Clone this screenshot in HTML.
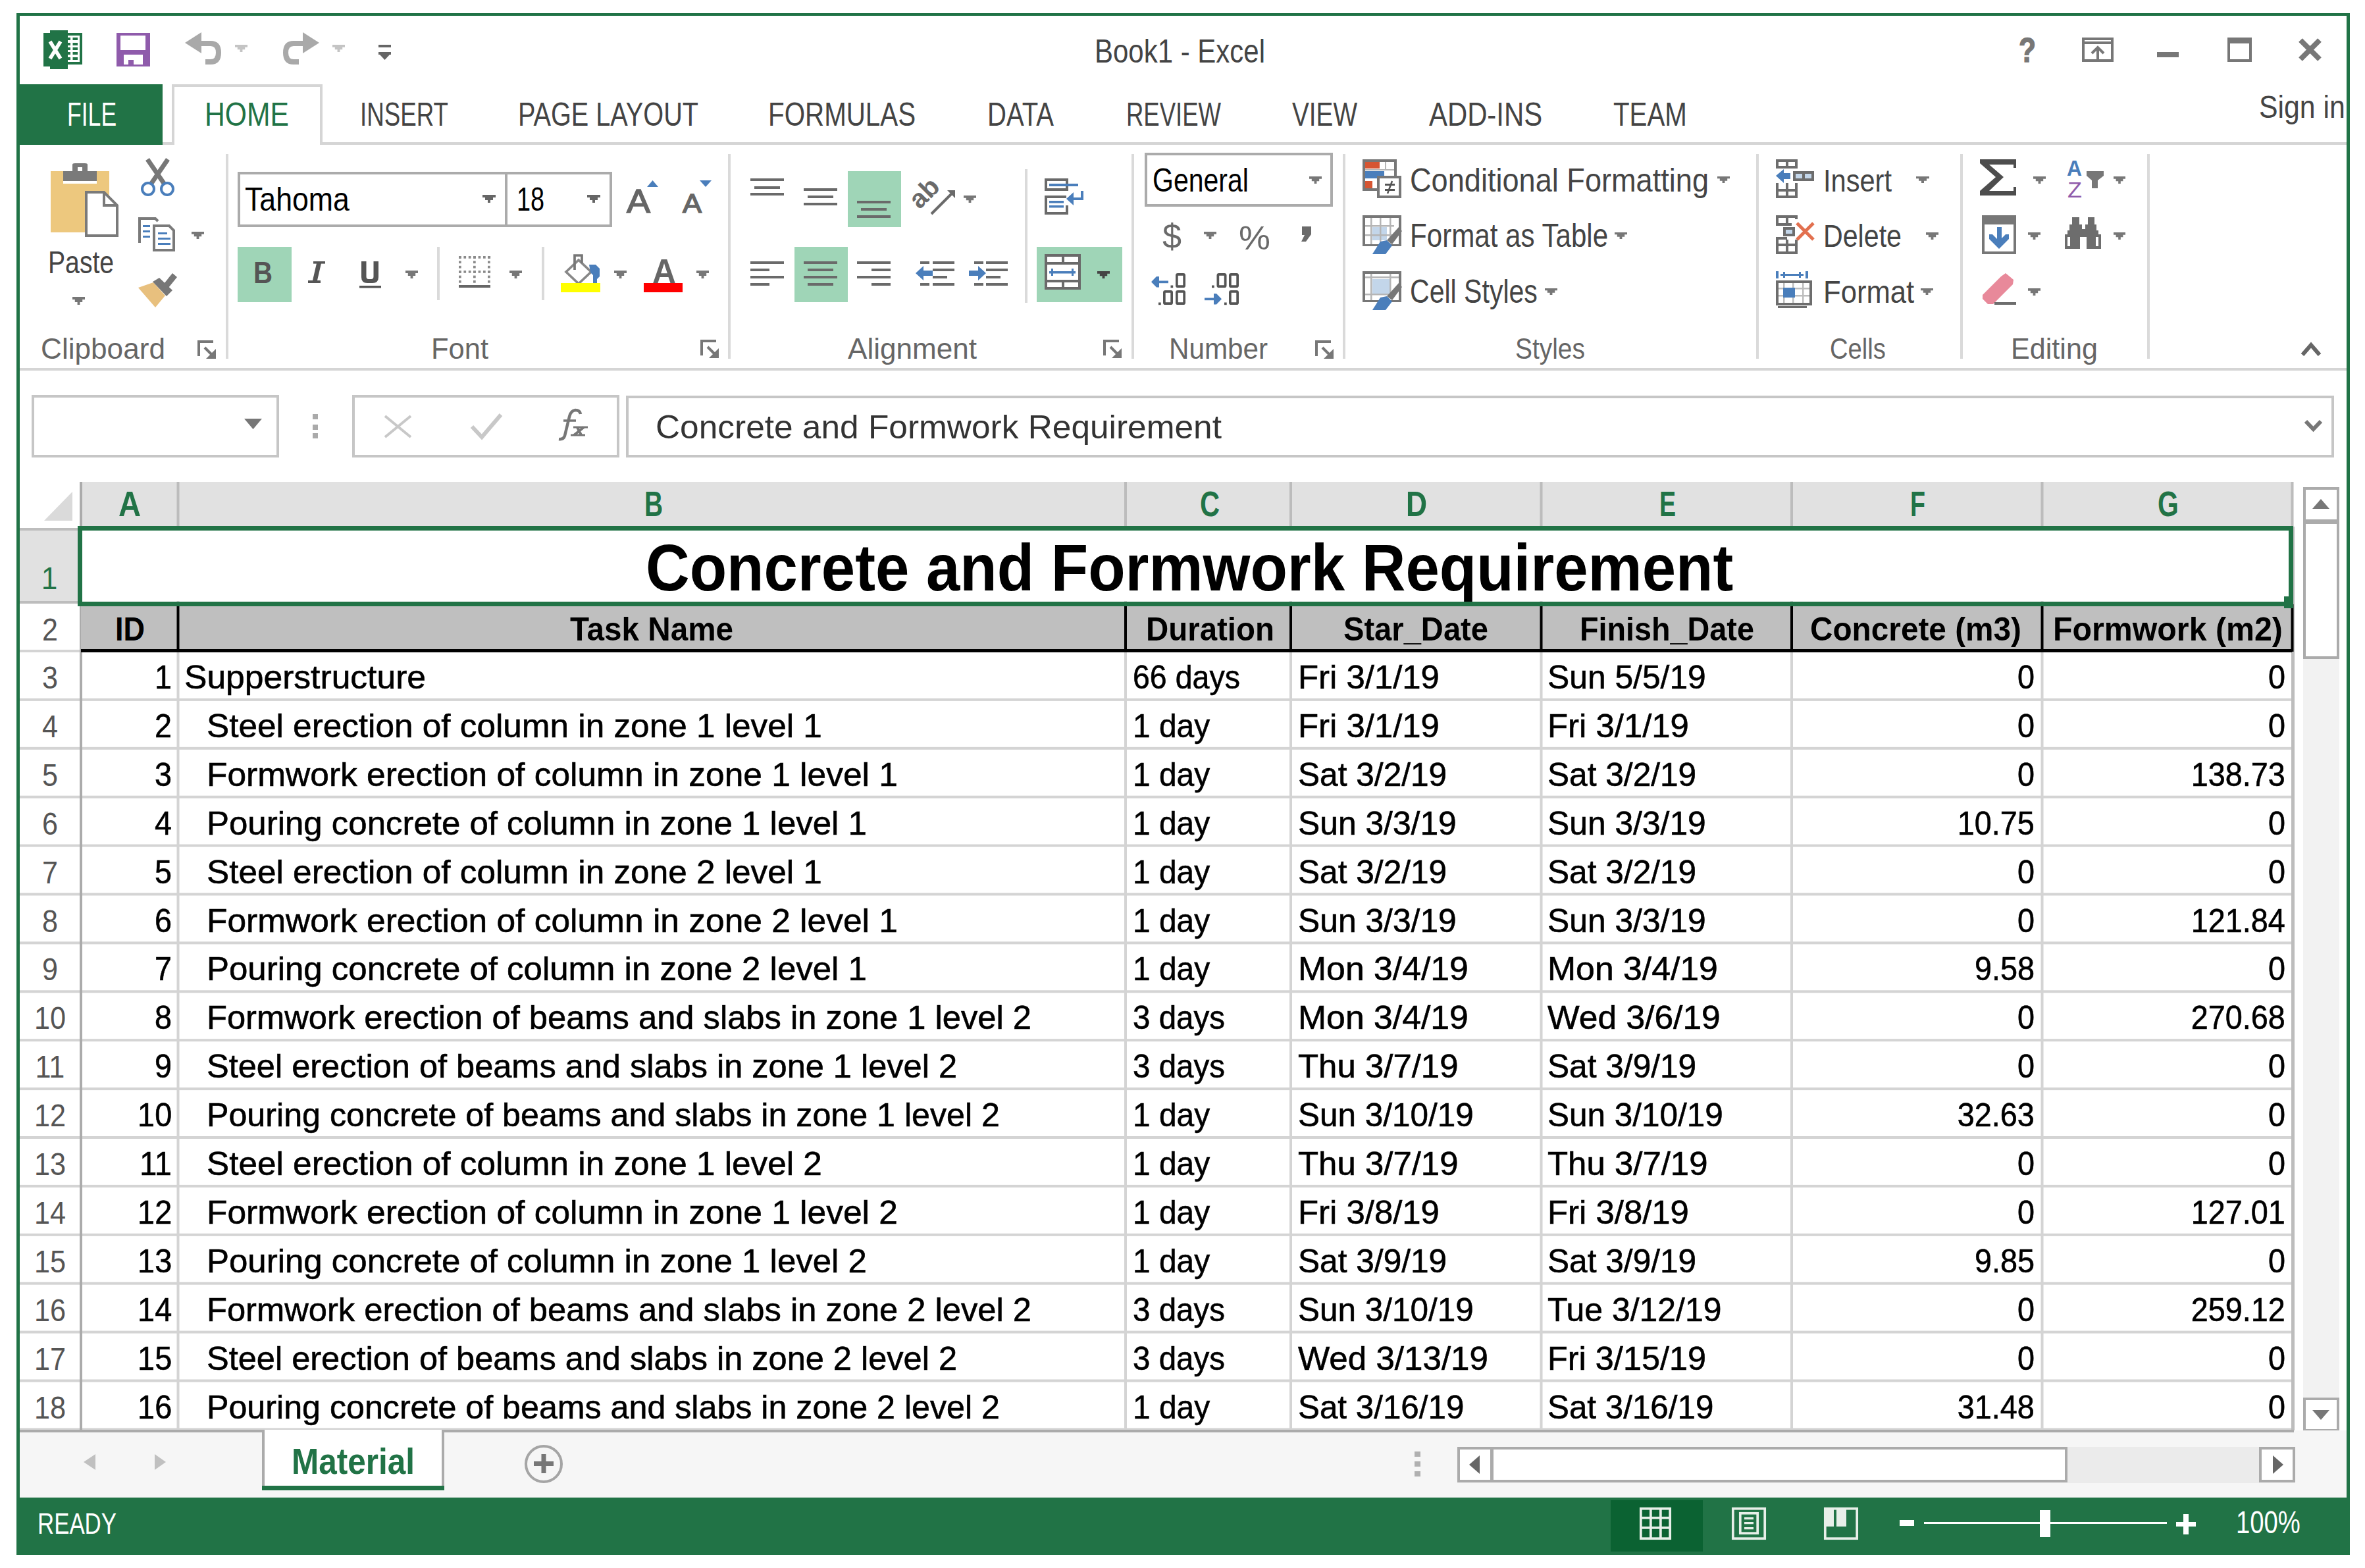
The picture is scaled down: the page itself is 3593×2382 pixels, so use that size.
<!DOCTYPE html>
<html><head><meta charset="utf-8"><style>
html,body{margin:0;padding:0;background:#fff;overflow:hidden}
svg{display:block}
text{font-family:"Liberation Sans",sans-serif}
</style></head><body>
<svg width="3593" height="2382" viewBox="0 0 3593 2382">
<rect x="0" y="0" width="3593" height="2382" fill="#ffffff"/>
<rect x="25" y="20" width="3545" height="4" fill="#217346"/>
<rect x="25" y="20" width="5" height="2342" fill="#217346"/>
<rect x="3565" y="20" width="5" height="2342" fill="#217346"/>
<text x="1663.0" y="95.0" font-size="49.42" textLength="259.0" lengthAdjust="spacingAndGlyphs" fill="#444">Book1 - Excel</text>
<rect x="30" y="216" width="3535" height="4" fill="#d5d5d5"/>
<rect x="29" y="128" width="218" height="92" fill="#217346"/>
<text x="102.0" y="191.0" font-size="49.42" textLength="75.1" lengthAdjust="spacingAndGlyphs" fill="#fff">FILE</text>
<rect x="261" y="128" width="229" height="95" fill="#fff"/>
<path d="M263 220 V130 H488 V220" fill="none" stroke="#d5d5d5" stroke-width="4"/>
<text x="311.0" y="191.0" font-size="49.42" textLength="128.0" lengthAdjust="spacingAndGlyphs" fill="#217346">HOME</text>
<text x="547.0" y="191.0" font-size="49.42" textLength="134.0" lengthAdjust="spacingAndGlyphs" fill="#444">INSERT</text>
<text x="787.0" y="191.0" font-size="49.42" textLength="274.0" lengthAdjust="spacingAndGlyphs" fill="#444">PAGE LAYOUT</text>
<text x="1167.0" y="191.0" font-size="49.42" textLength="224.1" lengthAdjust="spacingAndGlyphs" fill="#444">FORMULAS</text>
<text x="1500.0" y="191.0" font-size="49.42" textLength="100.9" lengthAdjust="spacingAndGlyphs" fill="#444">DATA</text>
<text x="1711.0" y="191.0" font-size="49.42" textLength="144.0" lengthAdjust="spacingAndGlyphs" fill="#444">REVIEW</text>
<text x="1963.0" y="191.0" font-size="49.42" textLength="99.0" lengthAdjust="spacingAndGlyphs" fill="#444">VIEW</text>
<text x="2171.0" y="191.0" font-size="49.42" textLength="172.1" lengthAdjust="spacingAndGlyphs" fill="#444">ADD-INS</text>
<text x="2451.0" y="191.0" font-size="49.42" textLength="111.9" lengthAdjust="spacingAndGlyphs" fill="#444">TEAM</text>
<text x="3432.0" y="179.0" font-size="47.97" textLength="130.9" lengthAdjust="spacingAndGlyphs" fill="#444">Sign in</text>
<rect x="30" y="559" width="3535" height="4" fill="#d5d5d5"/>
<rect x="343" y="234" width="4" height="311" fill="#dadada"/>
<rect x="1106" y="234" width="4" height="311" fill="#dadada"/>
<rect x="1719" y="234" width="4" height="311" fill="#dadada"/>
<rect x="2040" y="234" width="4" height="311" fill="#dadada"/>
<rect x="2668" y="234" width="4" height="311" fill="#dadada"/>
<rect x="2978" y="234" width="4" height="311" fill="#dadada"/>
<rect x="3262" y="234" width="4" height="311" fill="#dadada"/>
<text x="62.0" y="545.0" font-size="43.60" textLength="189.0" lengthAdjust="spacingAndGlyphs" fill="#666">Clipboard</text>
<text x="655.0" y="545.0" font-size="43.60" textLength="87.0" lengthAdjust="spacingAndGlyphs" fill="#666">Font</text>
<text x="1288.0" y="545.0" font-size="43.60" textLength="196.1" lengthAdjust="spacingAndGlyphs" fill="#666">Alignment</text>
<text x="1776.0" y="545.0" font-size="43.60" textLength="150.1" lengthAdjust="spacingAndGlyphs" fill="#666">Number</text>
<text x="2302.0" y="545.0" font-size="43.60" textLength="105.9" lengthAdjust="spacingAndGlyphs" fill="#666">Styles</text>
<text x="2780.0" y="545.0" font-size="43.60" textLength="84.9" lengthAdjust="spacingAndGlyphs" fill="#666">Cells</text>
<text x="3055.0" y="545.0" font-size="43.60" textLength="131.9" lengthAdjust="spacingAndGlyphs" fill="#666">Editing</text>
<text x="73.0" y="415.0" font-size="47.97" textLength="100.1" lengthAdjust="spacingAndGlyphs" fill="#444">Paste</text>
<rect x="363.0" y="263.0" width="565" height="80" fill="none" stroke="#ababab" stroke-width="4"/>
<rect x="767" y="261" width="4" height="84" fill="#ababab"/>
<text x="372.0" y="320.0" font-size="49.42" textLength="158.9" lengthAdjust="spacingAndGlyphs" fill="#000">Tahoma</text>
<text x="785.0" y="320.0" font-size="49.42" textLength="42.1" lengthAdjust="spacingAndGlyphs" fill="#000">18</text>
<rect x="1741.0" y="234.0" width="282" height="78" fill="none" stroke="#ababab" stroke-width="4"/>
<text x="1751.0" y="291.0" font-size="49.42" textLength="145.9" lengthAdjust="spacingAndGlyphs" fill="#000">General</text>
<text x="2142.0" y="291.0" font-size="49.42" textLength="454.0" lengthAdjust="spacingAndGlyphs" fill="#444">Conditional Formatting</text>
<text x="2142.0" y="375.0" font-size="49.42" textLength="301.1" lengthAdjust="spacingAndGlyphs" fill="#444">Format as Table</text>
<text x="2142.0" y="460.0" font-size="49.42" textLength="193.9" lengthAdjust="spacingAndGlyphs" fill="#444">Cell Styles</text>
<text x="2770.0" y="291.0" font-size="47.97" textLength="104.0" lengthAdjust="spacingAndGlyphs" fill="#444">Insert</text>
<text x="2770.0" y="375.0" font-size="47.97" textLength="119.0" lengthAdjust="spacingAndGlyphs" fill="#444">Delete</text>
<text x="2770.0" y="460.0" font-size="47.97" textLength="138.1" lengthAdjust="spacingAndGlyphs" fill="#444">Format</text>
<rect x="361" y="375" width="82" height="84" fill="#9fd5b7"/>
<rect x="1288" y="260" width="81" height="85" fill="#9fd5b7"/>
<rect x="1207" y="375" width="81" height="84" fill="#9fd5b7"/>
<rect x="1575" y="375" width="130" height="84" fill="#9fd5b7"/>
<path d="M66 50 H76 V46 H103 V105 H76 V101 H66 Z" fill="#217346"/>
<rect x="103" y="50" width="22" height="48" fill="#217346"/>
<rect x="103" y="54" width="18" height="40" fill="#fff"/>
<rect x="103" y="57" width="4" height="4" fill="#217346"/>
<rect x="110.5" y="57" width="7.5" height="4" fill="#217346"/>
<rect x="103" y="65" width="4" height="4" fill="#217346"/>
<rect x="110.5" y="65" width="7.5" height="4" fill="#217346"/>
<rect x="103" y="72" width="4" height="4" fill="#217346"/>
<rect x="110.5" y="72" width="7.5" height="4" fill="#217346"/>
<rect x="103" y="79" width="4" height="4" fill="#217346"/>
<rect x="110.5" y="79" width="7.5" height="4" fill="#217346"/>
<rect x="103" y="87" width="4" height="4" fill="#217346"/>
<rect x="110.5" y="87" width="7.5" height="4" fill="#217346"/>
<path d="M76 63 L92 89 M92 63 L76 89" fill="none" stroke="#fff" stroke-width="5.5"/>
<rect x="177" y="50" width="51" height="51" fill="#8f5bab"/>
<rect x="183" y="54" width="38" height="22" fill="#fff"/>
<rect x="188" y="83" width="29" height="15" fill="#fff"/>
<rect x="195" y="91" width="8" height="7" fill="#8f5bab"/>
<path d="M298 66 H320 Q332 66 332 80 Q332 94 320 94 H312" fill="none" stroke="#a9a9a9" stroke-width="8"/>
<path d="M281 65 L306 49 V81 Z" fill="#a9a9a9"/>
<path d="M357 68h19.00v3.67h-3.80v3.67h-3.80v3.67h-3.80v-3.67h-3.80v-3.67h-3.80z" fill="#c4c4c4"/>
<path d="M468 66 H446 Q434 66 434 80 Q434 94 446 94 H454" fill="none" stroke="#a9a9a9" stroke-width="8"/>
<path d="M485 65 L460 49 V81 Z" fill="#a9a9a9"/>
<path d="M505 68h19.00v3.67h-3.80v3.67h-3.80v3.67h-3.80v-3.67h-3.80v-3.67h-3.80z" fill="#c4c4c4"/>
<rect x="575" y="68" width="19" height="4" fill="#666"/>
<rect x="575" y="79" width="19" height="4" fill="#666"/>
<path d="M577 83 h15 l-7.5 8 z" fill="#666"/>
<text x="3067" y="94" font-size="52" font-weight="bold" fill="#777" stroke="#777" stroke-width="1.5" font-family="Liberation Sans" textLength="26" lengthAdjust="spacingAndGlyphs">?</text>
<rect x="3165.0" y="59.0" width="44" height="33" fill="none" stroke="#777" stroke-width="4"/>
<rect x="3163" y="63" width="48" height="4" fill="#777"/>
<path d="M3187 94 V72 M3178 81 L3187 72 L3196 81" fill="none" stroke="#777" stroke-width="4"/>
<rect x="3277" y="79" width="33" height="8" fill="#777"/>
<rect x="3386.0" y="59.0" width="33" height="33" fill="none" stroke="#777" stroke-width="4"/>
<rect x="3384" y="57" width="37" height="9" fill="#777"/>
<path d="M3495 61 L3524 90 M3524 61 L3495 90" fill="none" stroke="#777" stroke-width="8"/>
<path d="M77 260 H96 V279 H147 V260 H166 V353 H77 Z" fill="#edc87e"/>
<rect x="96" y="260" width="51" height="15" fill="#7a7a7a"/>
<path d="M110 260 V250 Q110 248 114 248 H129 Q133 248 133 250 V260 Z" fill="#7a7a7a"/>
<rect x="118" y="254" width="7" height="6" fill="#fff"/>
<path d="M129 290 H158 L180 312 V360 H129 Z" fill="#fff"/>
<path d="M131 292 H158 L178 312 V358 H131 Z" fill="none" stroke="#7a7a7a" stroke-width="4"/>
<path d="M158 292 V312 H178" fill="none" stroke="#7a7a7a" stroke-width="4"/>
<path d="M110 451h19.00v4.00h-3.80v4.00h-3.80v4.00h-3.80v-4.00h-3.80v-4.00h-3.80z" fill="#777"/>
<path d="M224 242 L250 280 M255 242 L229 280" fill="none" stroke="#777" stroke-width="7"/>
<circle cx="225" cy="287" r="9" fill="none" stroke="#4a7ebb" stroke-width="4"/>
<circle cx="254" cy="287" r="9" fill="none" stroke="#4a7ebb" stroke-width="4"/>
<path d="M212 369 V332 H236 L240 336" fill="none" stroke="#7a7a7a" stroke-width="4"/>
<rect x="217" y="342" width="11" height="3" fill="#4a7ebb"/>
<rect x="217" y="350" width="11" height="3" fill="#4a7ebb"/>
<rect x="217" y="358" width="11" height="3" fill="#4a7ebb"/>
<path d="M234 343 H257 L265 351 V382 H234 Z" fill="#fff"/>
<path d="M234 343 H257 L264 350 V380 H234 Z" fill="none" stroke="#7a7a7a" stroke-width="4"/>
<rect x="240" y="353" width="14" height="3" fill="#4a7ebb"/>
<rect x="240" y="361" width="19" height="3" fill="#4a7ebb"/>
<rect x="240" y="369" width="19" height="3" fill="#4a7ebb"/>
<path d="M291 352h19.00v3.67h-3.80v3.67h-3.80v3.67h-3.80v-3.67h-3.80v-3.67h-3.80z" fill="#777"/>
<path d="M210 437 L233 429 L251 449 L236 467 Z" fill="#e8c07e"/>
<path d="M232 428 L242 422 L262 441 L253 450 Z" fill="#777"/>
<path d="M249 431 L262 415 L269 421 L256 437 Z" fill="#777"/>
<path d="M302 541V519h22" fill="none" stroke="#777" stroke-width="4"/><path d="M311 528L322 539" stroke="#777" stroke-width="4"/><path d="M328 530V545H313z" fill="#777"/>
<path d="M733 296h20.00v4.00h-4.00v4.00h-4.00v4.00h-4.00v-4.00h-4.00v-4.00h-4.00z" fill="#666"/>
<path d="M892 296h20.00v4.00h-4.00v4.00h-4.00v4.00h-4.00v-4.00h-4.00v-4.00h-4.00z" fill="#666"/>
<text x="952" y="323" font-size="50" fill="#666" stroke="#666" stroke-width="1.5" font-family="Liberation Sans" textLength="36" lengthAdjust="spacingAndGlyphs">A</text>
<path d="M983 284 L991.5 274 L1000 284 Z" fill="#4a7ebb"/>
<text x="1037" y="323" font-size="40" fill="#666" stroke="#666" stroke-width="1.5" font-family="Liberation Sans" textLength="29" lengthAdjust="spacingAndGlyphs">A</text>
<path d="M1063 274 L1081 274 L1072 284 Z" fill="#4a7ebb"/>
<text x="385" y="430" font-size="47" font-weight="bold" fill="#555" font-family="Liberation Sans" textLength="29" lengthAdjust="spacingAndGlyphs">B</text>
<rect x="476" y="397" width="18" height="3.6" fill="#555"/>
<rect x="468" y="426" width="19" height="4" fill="#555"/>
<path d="M481 400 H488 L482 426 H475 Z" fill="#555"/>
<path d="M549 397 H556.5 V420 Q556.5 424 560 424 H564 Q567.5 424 567.5 420 V397 H575 V421 Q575 430 566 430 H558 Q549 430 549 421 Z" fill="#555"/>
<rect x="546" y="434" width="33" height="3.5" fill="#555"/>
<path d="M616 411h19.00v4.00h-3.80v4.00h-3.80v4.00h-3.80v-4.00h-3.80v-4.00h-3.80z" fill="#777"/>
<rect x="664" y="375" width="4" height="81" fill="#dadada"/>
<rect x="697.0" y="389" width="3.7" height="3.7" fill="#8a8a8a"/>
<rect x="697.0" y="411" width="3.7" height="3.7" fill="#8a8a8a"/>
<rect x="704.4" y="389" width="3.7" height="3.7" fill="#8a8a8a"/>
<rect x="704.4" y="411" width="3.7" height="3.7" fill="#8a8a8a"/>
<rect x="711.8" y="389" width="3.7" height="3.7" fill="#8a8a8a"/>
<rect x="711.8" y="411" width="3.7" height="3.7" fill="#8a8a8a"/>
<rect x="719.2" y="389" width="3.7" height="3.7" fill="#8a8a8a"/>
<rect x="719.2" y="411" width="3.7" height="3.7" fill="#8a8a8a"/>
<rect x="726.6" y="389" width="3.7" height="3.7" fill="#8a8a8a"/>
<rect x="726.6" y="411" width="3.7" height="3.7" fill="#8a8a8a"/>
<rect x="734.0" y="389" width="3.7" height="3.7" fill="#8a8a8a"/>
<rect x="734.0" y="411" width="3.7" height="3.7" fill="#8a8a8a"/>
<rect x="741.4" y="389" width="3.7" height="3.7" fill="#8a8a8a"/>
<rect x="741.4" y="411" width="3.7" height="3.7" fill="#8a8a8a"/>
<rect x="697" y="389.0" width="3.7" height="3.7" fill="#8a8a8a"/>
<rect x="719" y="389.0" width="3.7" height="3.7" fill="#8a8a8a"/>
<rect x="741" y="389.0" width="3.7" height="3.7" fill="#8a8a8a"/>
<rect x="697" y="396.4" width="3.7" height="3.7" fill="#8a8a8a"/>
<rect x="719" y="396.4" width="3.7" height="3.7" fill="#8a8a8a"/>
<rect x="741" y="396.4" width="3.7" height="3.7" fill="#8a8a8a"/>
<rect x="697" y="403.8" width="3.7" height="3.7" fill="#8a8a8a"/>
<rect x="719" y="403.8" width="3.7" height="3.7" fill="#8a8a8a"/>
<rect x="741" y="403.8" width="3.7" height="3.7" fill="#8a8a8a"/>
<rect x="697" y="411.2" width="3.7" height="3.7" fill="#8a8a8a"/>
<rect x="719" y="411.2" width="3.7" height="3.7" fill="#8a8a8a"/>
<rect x="741" y="411.2" width="3.7" height="3.7" fill="#8a8a8a"/>
<rect x="697" y="418.6" width="3.7" height="3.7" fill="#8a8a8a"/>
<rect x="719" y="418.6" width="3.7" height="3.7" fill="#8a8a8a"/>
<rect x="741" y="418.6" width="3.7" height="3.7" fill="#8a8a8a"/>
<rect x="697" y="426.0" width="3.7" height="3.7" fill="#8a8a8a"/>
<rect x="719" y="426.0" width="3.7" height="3.7" fill="#8a8a8a"/>
<rect x="741" y="426.0" width="3.7" height="3.7" fill="#8a8a8a"/>
<rect x="697" y="433" width="48" height="4" fill="#666"/>
<path d="M774 411h19.00v4.00h-3.80v4.00h-3.80v4.00h-3.80v-4.00h-3.80v-4.00h-3.80z" fill="#777"/>
<rect x="823" y="375" width="4" height="81" fill="#dadada"/>
<path d="M860 413 L879 395 L898 413 L879 431 Z" fill="#fff"/>
<path d="M860 413 L879 395 L898 413 L879 431 Z" fill="none" stroke="#888" stroke-width="3.7"/>
<path d="M873 410 V388 H884 V400" fill="none" stroke="#777" stroke-width="3.7"/>
<path d="M895 402 H905 L911 408 V420 L907 424 V430 H901 V418 L897 414 Z" fill="#4a7ebb"/>
<rect x="852" y="430" width="60" height="14" fill="#ffff00"/>
<path d="M933 411h19.00v4.00h-3.80v4.00h-3.80v4.00h-3.80v-4.00h-3.80v-4.00h-3.80z" fill="#777"/>
<text x="991" y="430" font-size="52" font-weight="bold" fill="#666" font-family="Liberation Sans" textLength="36" lengthAdjust="spacingAndGlyphs">A</text>
<rect x="978" y="430" width="59" height="14" fill="#ff0000"/>
<path d="M1058 411h19.00v4.00h-3.80v4.00h-3.80v4.00h-3.80v-4.00h-3.80v-4.00h-3.80z" fill="#777"/>
<path d="M1066 540V518h22" fill="none" stroke="#777" stroke-width="4"/><path d="M1075 527L1086 538" stroke="#777" stroke-width="4"/><path d="M1092 529V544H1077z" fill="#777"/>
<rect x="1140" y="271" width="51" height="4" fill="#6a6a6a"/>
<rect x="1146" y="283" width="39" height="4" fill="#6a6a6a"/>
<rect x="1140" y="293" width="51" height="4" fill="#6a6a6a"/>
<rect x="1221" y="286" width="51" height="4" fill="#6a6a6a"/>
<rect x="1227" y="297" width="39" height="4" fill="#6a6a6a"/>
<rect x="1221" y="308" width="51" height="4" fill="#6a6a6a"/>
<rect x="1302" y="305" width="51" height="4" fill="#6a6a6a"/>
<rect x="1308" y="316" width="39" height="4" fill="#6a6a6a"/>
<rect x="1302" y="327" width="51" height="4" fill="#6a6a6a"/>
<text x="0" y="0" font-size="40" font-weight="bold" fill="#6a6a6a" font-family="Liberation Sans" transform="translate(1397 319) rotate(-45)">ab</text>
<path d="M1415 325 L1446 294" fill="none" stroke="#6a6a6a" stroke-width="4"/>
<path d="M1439 289 H1451 V301 Z" fill="#6a6a6a"/>
<path d="M1464 297h19.00v3.67h-3.80v3.67h-3.80v3.67h-3.80v-3.67h-3.80v-3.67h-3.80z" fill="#777"/>
<rect x="1557" y="257" width="4" height="203" fill="#dadada"/>
<path d="M1589 273 H1621 V288 H1589 Z" fill="none" stroke="#6a6a6a" stroke-width="4"/>
<rect x="1594" y="279" width="44" height="4" fill="#4a7ebb"/>
<path d="M1620 299 H1589 V324 H1621 V312" fill="none" stroke="#6a6a6a" stroke-width="4"/>
<rect x="1594" y="305" width="22" height="3.5" fill="#4a7ebb"/>
<rect x="1594" y="312" width="22" height="3.5" fill="#4a7ebb"/>
<path d="M1644 290 V302 H1628" fill="none" stroke="#4a7ebb" stroke-width="4"/>
<path d="M1620 302 L1631 292 V312 Z" fill="#4a7ebb"/>
<rect x="1140" y="397" width="51" height="4" fill="#6a6a6a"/>
<rect x="1140" y="408" width="29" height="4" fill="#6a6a6a"/>
<rect x="1140" y="419" width="51" height="4" fill="#6a6a6a"/>
<rect x="1140" y="430" width="29" height="4" fill="#6a6a6a"/>
<rect x="1221" y="397" width="51" height="4" fill="#6a6a6a"/>
<rect x="1227" y="408" width="39" height="4" fill="#6a6a6a"/>
<rect x="1221" y="419" width="51" height="4" fill="#6a6a6a"/>
<rect x="1227" y="430" width="39" height="4" fill="#6a6a6a"/>
<rect x="1302" y="397" width="51" height="4" fill="#6a6a6a"/>
<rect x="1324" y="408" width="29" height="4" fill="#6a6a6a"/>
<rect x="1302" y="419" width="51" height="4" fill="#6a6a6a"/>
<rect x="1324" y="430" width="29" height="4" fill="#6a6a6a"/>
<rect x="1398" y="397" width="14" height="4" fill="#6a6a6a"/>
<rect x="1398" y="430" width="14" height="4" fill="#6a6a6a"/>
<rect x="1417" y="397" width="33" height="4" fill="#6a6a6a"/>
<rect x="1417" y="408" width="33" height="4" fill="#6a6a6a"/>
<rect x="1417" y="419" width="22" height="4" fill="#6a6a6a"/>
<rect x="1417" y="430" width="33" height="4" fill="#6a6a6a"/>
<path d="M1391 415 L1403 404 V411 H1417 V419 H1403 V426 Z" fill="#4a7ebb"/>
<rect x="1480" y="397" width="14" height="4" fill="#6a6a6a"/>
<rect x="1480" y="430" width="14" height="4" fill="#6a6a6a"/>
<rect x="1498" y="397" width="33" height="4" fill="#6a6a6a"/>
<rect x="1498" y="408" width="33" height="4" fill="#6a6a6a"/>
<rect x="1498" y="419" width="22" height="4" fill="#6a6a6a"/>
<rect x="1498" y="430" width="33" height="4" fill="#6a6a6a"/>
<path d="M1498 415 L1486 404 V411 H1472 V419 H1486 V426 Z" fill="#4a7ebb"/>
<rect x="1587" y="386" width="55" height="54" fill="#fff"/>
<rect x="1589.0" y="388.0" width="51" height="50" fill="none" stroke="#6a6a6a" stroke-width="4"/>
<rect x="1587" y="398" width="55" height="4" fill="#6a6a6a"/>
<rect x="1587" y="425" width="55" height="4" fill="#6a6a6a"/>
<rect x="1613" y="386" width="4" height="14" fill="#6a6a6a"/>
<rect x="1613" y="425" width="4" height="15" fill="#6a6a6a"/>
<rect x="1594" y="412" width="40" height="3.5" fill="#4a7ebb"/>
<rect x="1597" y="408" width="3" height="11" fill="#4a7ebb"/>
<rect x="1628" y="408" width="3" height="11" fill="#4a7ebb"/>
<path d="M1667 412h19.00v3.67h-3.80v3.67h-3.80v3.67h-3.80v-3.67h-3.80v-3.67h-3.80z" fill="#444"/>
<path d="M1678 540V518h22" fill="none" stroke="#777" stroke-width="4"/><path d="M1687 527L1698 538" stroke="#777" stroke-width="4"/><path d="M1704 529V544H1689z" fill="#777"/>
<path d="M1989 268h19.00v3.67h-3.80v3.67h-3.80v3.67h-3.80v-3.67h-3.80v-3.67h-3.80z" fill="#777"/>
<text x="1766" y="377" font-size="52" fill="#6a6a6a" font-family="Liberation Sans" textLength="29" lengthAdjust="spacingAndGlyphs">$</text>
<path d="M1829 352h19.00v3.67h-3.80v3.67h-3.80v3.67h-3.80v-3.67h-3.80v-3.67h-3.80z" fill="#777"/>
<text x="1882" y="379" font-size="50" fill="#6a6a6a" font-family="Liberation Sans" textLength="48" lengthAdjust="spacingAndGlyphs">%</text>
<path d="M1978 344 H1992 V356 L1984 367 H1977 L1982 357 H1978 Z" fill="#6a6a6a"/>
<rect x="1778.5" y="433.5" width="3.7" height="3.7" fill="#555"/>
<rect x="1787.85" y="416.85" width="11.3" height="18.3" rx="1.5" fill="none" stroke="#555" stroke-width="3.7"/>
<rect x="1760" y="459.5" width="3.7" height="3.7" fill="#555"/>
<rect x="1768.85" y="442.85" width="11.3" height="18.3" rx="1.5" fill="none" stroke="#555" stroke-width="3.7"/>
<rect x="1787.85" y="442.85" width="11.3" height="18.3" rx="1.5" fill="none" stroke="#555" stroke-width="3.7"/>
<rect x="1755" y="426.5" width="20" height="3.7" fill="#4a7ebb"/>
<path d="M1749 428.3 L1757 420 H1761 V436.6 H1757 Z" fill="#4a7ebb"/>
<rect x="1841" y="433.5" width="3.7" height="3.7" fill="#555"/>
<rect x="1850.35" y="416.85" width="11.3" height="18.3" rx="1.5" fill="none" stroke="#555" stroke-width="3.7"/>
<rect x="1868.85" y="416.85" width="11.3" height="18.3" rx="1.5" fill="none" stroke="#555" stroke-width="3.7"/>
<rect x="1860" y="459.5" width="3.7" height="3.7" fill="#555"/>
<rect x="1868.85" y="442.85" width="11.3" height="18.3" rx="1.5" fill="none" stroke="#555" stroke-width="3.7"/>
<rect x="1830" y="452.5" width="20" height="3.7" fill="#4a7ebb"/>
<path d="M1856 454.3 L1848 446 H1844 V462.6 H1848 Z" fill="#4a7ebb"/>
<path d="M2000 541V519h22" fill="none" stroke="#777" stroke-width="4"/><path d="M2009 528L2020 539" stroke="#777" stroke-width="4"/><path d="M2026 530V545H2011z" fill="#777"/>
<rect x="2072.0" y="244.0" width="48" height="44" fill="none" stroke="#777" stroke-width="4"/>
<rect x="2074" y="246" width="22" height="10" fill="#d65532"/>
<rect x="2074" y="260" width="29" height="11" fill="#4a7ebb"/>
<rect x="2074" y="275" width="11" height="11" fill="#d65532"/>
<rect x="2074" y="257" width="44" height="2" fill="#b5b5b5"/>
<rect x="2104" y="246" width="2" height="12" fill="#b5b5b5"/>
<rect x="2092" y="267" width="37" height="34" fill="#fff"/>
<rect x="2094.0" y="269.0" width="33" height="30" fill="none" stroke="#777" stroke-width="4"/>
<rect x="2104" y="279" width="15" height="3" fill="#555"/>
<rect x="2104" y="287" width="15" height="3" fill="#555"/>
<path d="M2115 275 L2108 294" fill="none" stroke="#555" stroke-width="2.5"/>
<path d="M2609 268h19.00v3.33h-3.80v3.33h-3.80v3.33h-3.80v-3.33h-3.80v-3.33h-3.80z" fill="#777"/>
<rect x="2072.0" y="329.0" width="55" height="43" fill="none" stroke="#777" stroke-width="4"/>
<rect x="2074" y="331" width="51" height="40" fill="#fff"/>
<rect x="2085" y="345" width="22" height="20" fill="#c3d6ea"/>
<rect x="2074" y="342" width="44" height="2.5" fill="#b5b5b5"/>
<rect x="2074" y="356" width="44" height="2.5" fill="#b5b5b5"/>
<rect x="2082" y="331" width="2.5" height="40" fill="#b5b5b5"/>
<rect x="2096" y="331" width="2.5" height="40" fill="#b5b5b5"/>
<rect x="2111" y="331" width="2.5" height="40" fill="#b5b5b5"/>
<path d="M2107 365 L2125 345 L2130 351 L2115 371 Z" fill="#777"/>
<path d="M2085 386 L2097 367 L2107 365 L2115 373 L2105 386 Z" fill="#4a7ebb"/>
<path d="M2453 353h19.00v3.33h-3.80v3.33h-3.80v3.33h-3.80v-3.33h-3.80v-3.33h-3.80z" fill="#777"/>
<rect x="2072.0" y="414.0" width="55" height="43" fill="none" stroke="#777" stroke-width="4"/>
<rect x="2074" y="416" width="51" height="40" fill="#fff"/>
<rect x="2085" y="424" width="28" height="22" fill="#c3d6ea"/>
<rect x="2074" y="420" width="51" height="2.5" fill="#b5b5b5"/>
<rect x="2074" y="446" width="40" height="2.5" fill="#b5b5b5"/>
<rect x="2082" y="416" width="2.5" height="40" fill="#b5b5b5"/>
<rect x="2111" y="416" width="2.5" height="30" fill="#b5b5b5"/>
<path d="M2107 450 L2125 430 L2130 436 L2115 456 Z" fill="#777"/>
<path d="M2085 471 L2097 452 L2107 450 L2115 458 L2105 471 Z" fill="#4a7ebb"/>
<path d="M2347 438h19.00v3.33h-3.80v3.33h-3.80v3.33h-3.80v-3.33h-3.80v-3.33h-3.80z" fill="#777"/>
<rect x="2700.0" y="244.0" width="29" height="10" fill="none" stroke="#6d6d6d" stroke-width="4"/>
<rect x="2713" y="242" width="4" height="14" fill="#6d6d6d"/>
<path d="M2700 278 V299 H2729 V278" fill="none" stroke="#6d6d6d" stroke-width="4"/>
<rect x="2698" y="287" width="33" height="4" fill="#6d6d6d"/>
<rect x="2713" y="278" width="4" height="22" fill="#6d6d6d"/>
<rect x="2726.0" y="262.0" width="28" height="11" fill="none" stroke="#6d6d6d" stroke-width="4"/>
<rect x="2728" y="264" width="10" height="7" fill="#c3d6ea"/>
<rect x="2742" y="264" width="10" height="7" fill="#c3d6ea"/>
<rect x="2738" y="260" width="4" height="15" fill="#6d6d6d"/>
<path d="M2698 267 L2710 257 V263 H2720 V272 H2710 V278 Z" fill="#4a7ebb"/>
<path d="M2911 268h20.00v3.33h-4.00v3.33h-4.00v3.33h-4.00v-3.33h-4.00v-3.33h-4.00z" fill="#777"/>
<path d="M2729 333 V329 H2700 V341 H2722" fill="none" stroke="#6d6d6d" stroke-width="4"/>
<rect x="2713" y="327" width="4" height="14" fill="#6d6d6d"/>
<rect x="2711.0" y="347.0" width="14" height="10" fill="none" stroke="#6d6d6d" stroke-width="4"/>
<rect x="2713" y="349" width="10" height="6" fill="#c3d6ea"/>
<path d="M2715 362 H2700 V384 H2729 V364" fill="none" stroke="#6d6d6d" stroke-width="4"/>
<rect x="2698" y="370" width="33" height="4" fill="#6d6d6d"/>
<rect x="2713" y="364" width="4" height="22" fill="#6d6d6d"/>
<path d="M2730 339 L2755 364 M2755 339 L2730 364" fill="none" stroke="#e2704f" stroke-width="5"/>
<path d="M2926 353h19.00v3.67h-3.80v3.67h-3.80v3.67h-3.80v-3.67h-3.80v-3.67h-3.80z" fill="#777"/>
<rect x="2698" y="412" width="4" height="11" fill="#4a7ebb"/>
<rect x="2743" y="412" width="4" height="11" fill="#4a7ebb"/>
<rect x="2705" y="416" width="35" height="3" fill="#4a7ebb"/>
<rect x="2709" y="413" width="3" height="9" fill="#4a7ebb"/>
<rect x="2733" y="413" width="3" height="9" fill="#4a7ebb"/>
<rect x="2700.0" y="428.0" width="51" height="34" fill="none" stroke="#6d6d6d" stroke-width="4"/>
<rect x="2709" y="430" width="2.5" height="30" fill="#bdbdbd"/>
<rect x="2723" y="430" width="2.5" height="30" fill="#bdbdbd"/>
<rect x="2738" y="430" width="2.5" height="30" fill="#bdbdbd"/>
<rect x="2702" y="437" width="47" height="2.5" fill="#bdbdbd"/>
<rect x="2702" y="448" width="47" height="2.5" fill="#bdbdbd"/>
<rect x="2709" y="437" width="18" height="15" fill="#4a7ebb"/>
<rect x="2701" y="465" width="25" height="3" fill="#6d6d6d"/>
<rect x="2723" y="465" width="22" height="3" fill="#6d6d6d"/>
<path d="M2918 438h19.00v3.33h-3.80v3.33h-3.80v3.33h-3.80v-3.33h-3.80v-3.33h-3.80z" fill="#777"/>
<path d="M3008 242 H3063 V255 H3059 V250 H3022 L3044 269 L3022 290 H3059 V284 H3063 V297 H3008 V290 L3032 269 L3008 248 Z" fill="#4d4d4d"/>
<path d="M3089 268h19.00v3.67h-3.80v3.67h-3.80v3.67h-3.80v-3.67h-3.80v-3.67h-3.80z" fill="#777"/>
<text x="3140" y="267" font-size="34" font-weight="bold" fill="#4a7ebb" font-family="Liberation Sans" textLength="23" lengthAdjust="spacingAndGlyphs">A</text>
<text x="3141" y="300" font-size="34" fill="#8f5bab" font-family="Liberation Sans" textLength="22" lengthAdjust="spacingAndGlyphs">Z</text>
<path d="M3170 260 H3196 V267 L3187 274 V286 H3178 V274 L3170 267 Z" fill="#777"/>
<path d="M3211 268h18.00v3.67h-3.60v3.67h-3.60v3.67h-3.60v-3.67h-3.60v-3.67h-3.60z" fill="#777"/>
<rect x="3013.0" y="329.0" width="48" height="55" fill="none" stroke="#777" stroke-width="4"/>
<rect x="3011" y="327" width="52" height="14" fill="#777"/>
<rect x="3034" y="345" width="7" height="25" fill="#4a7ebb"/>
<path d="M3022 356 L3027 356 L3037 366 L3047 356 L3052 356 V363 L3037 378 L3022 363 Z" fill="#4a7ebb"/>
<path d="M3081 353h19.00v3.67h-3.80v3.67h-3.80v3.67h-3.80v-3.67h-3.80v-3.67h-3.80z" fill="#777"/>
<path d="M3148 330 H3159 V341 H3163 V348 H3168 V341 H3172 V330 H3182 V341 H3185 V350 H3188 V356 H3192 V378 H3170 V360 H3160 V378 H3137 V356 H3141 V350 H3144 V341 H3148 Z" fill="#6d6d6d"/>
<rect x="3141" y="360" width="4" height="14" fill="#fff"/>
<rect x="3184" y="360" width="4" height="14" fill="#fff"/>
<path d="M3211 353h18.00v3.67h-3.60v3.67h-3.60v3.67h-3.60v-3.67h-3.60v-3.67h-3.60z" fill="#777"/>
<path d="M3040 420 L3047 415 L3059 425 L3058 432 L3028 462 L3020 462 L3012 454 L3012 448 Z" fill="#e8899a"/>
<rect x="3030" y="459" width="33" height="4" fill="#6d6d6d"/>
<path d="M3081 438h19.00v3.67h-3.80v3.67h-3.80v3.67h-3.80v-3.67h-3.80v-3.67h-3.80z" fill="#777"/>
<path d="M3498 539 L3511 524 L3524 539" fill="none" stroke="#666" stroke-width="6"/>
<path d="M371 636 H398 L384.5 652 Z" fill="#777"/>
<rect x="475" y="629" width="8" height="8" fill="#aaa"/>
<rect x="475" y="645" width="8" height="8" fill="#aaa"/>
<rect x="475" y="658" width="8" height="8" fill="#aaa"/>
<path d="M585 632 L624 664 M624 632 L585 664" fill="none" stroke="#c8c8c8" stroke-width="4"/>
<path d="M717 648 L732 664 L761 630" fill="none" stroke="#c8c8c8" stroke-width="6"/>
<path d="M882 629 Q881 623 874 623 Q867 624 865 633 L858 662 Q856 668 849 667" fill="none" stroke="#777" stroke-width="4.5"/>
<path d="M856 639 H875" fill="none" stroke="#777" stroke-width="3.5"/>
<path d="M871 649 H893 M867 661 H889" fill="none" stroke="#777" stroke-width="3.2"/>
<path d="M887 649 L872 661 M877 649 L883 661" fill="none" stroke="#777" stroke-width="4"/>
<path d="M3503 640 L3514.5 652 L3526 640" fill="none" stroke="#777" stroke-width="6"/>
<rect x="50.0" y="602.0" width="372" height="91" fill="none" stroke="#c6c6c6" stroke-width="4"/>
<rect x="537.0" y="602.0" width="402" height="91" fill="none" stroke="#c6c6c6" stroke-width="4"/>
<rect x="953.0" y="603.0" width="2591" height="90" fill="none" stroke="#c6c6c6" stroke-width="4"/>
<text x="996.0" y="666.0" font-size="49.42" textLength="860.0" lengthAdjust="spacingAndGlyphs" fill="#333">Concrete and Formwork Requirement</text>
<rect x="30" y="732" width="3453" height="68" fill="#e1e1e1"/>
<rect x="30" y="732" width="91" height="68" fill="#fff"/>
<path d="M110 747 V791 H67 Z" fill="#dadada"/>
<rect x="30" y="804" width="91" height="113" fill="#e1e1e1"/>
<rect x="30" y="802" width="91" height="4" fill="#bdbdbd"/>
<rect x="30" y="913" width="91" height="4" fill="#bdbdbd"/>
<rect x="30" y="987.0" width="3453" height="4" fill="#d4d4d4"/>
<rect x="30" y="1060.9" width="3453" height="4" fill="#d4d4d4"/>
<rect x="30" y="1134.8" width="3453" height="4" fill="#d4d4d4"/>
<rect x="30" y="1208.7" width="3453" height="4" fill="#d4d4d4"/>
<rect x="30" y="1282.6" width="3453" height="4" fill="#d4d4d4"/>
<rect x="30" y="1356.5" width="3453" height="4" fill="#d4d4d4"/>
<rect x="30" y="1430.4" width="3453" height="4" fill="#d4d4d4"/>
<rect x="30" y="1504.3000000000002" width="3453" height="4" fill="#d4d4d4"/>
<rect x="30" y="1578.2" width="3453" height="4" fill="#d4d4d4"/>
<rect x="30" y="1652.1" width="3453" height="4" fill="#d4d4d4"/>
<rect x="30" y="1726.0" width="3453" height="4" fill="#d4d4d4"/>
<rect x="30" y="1799.9" width="3453" height="4" fill="#d4d4d4"/>
<rect x="30" y="1873.8000000000002" width="3453" height="4" fill="#d4d4d4"/>
<rect x="30" y="1947.7" width="3453" height="4" fill="#d4d4d4"/>
<rect x="30" y="2021.6000000000001" width="3453" height="4" fill="#d4d4d4"/>
<rect x="30" y="2095.5" width="3453" height="4" fill="#d4d4d4"/>
<rect x="30" y="2169.4" width="3453" height="4" fill="#d4d4d4"/>
<rect x="268.5" y="800" width="4" height="1371" fill="#d4d4d4"/>
<rect x="1708" y="800" width="4" height="1371" fill="#d4d4d4"/>
<rect x="1959" y="800" width="4" height="1371" fill="#d4d4d4"/>
<rect x="2339.5" y="800" width="4" height="1371" fill="#d4d4d4"/>
<rect x="2720" y="800" width="4" height="1371" fill="#d4d4d4"/>
<rect x="3100.5" y="800" width="4" height="1371" fill="#d4d4d4"/>
<rect x="268.5" y="732" width="4" height="68" fill="#bcbcbc"/>
<rect x="1708" y="732" width="4" height="68" fill="#bcbcbc"/>
<rect x="1959" y="732" width="4" height="68" fill="#bcbcbc"/>
<rect x="2339.5" y="732" width="4" height="68" fill="#bcbcbc"/>
<rect x="2720" y="732" width="4" height="68" fill="#bcbcbc"/>
<rect x="3100.5" y="732" width="4" height="68" fill="#bcbcbc"/>
<rect x="3480.5" y="732" width="4" height="68" fill="#bcbcbc"/>
<rect x="121" y="732" width="4" height="1441" fill="#ababab"/>
<rect x="3481" y="800" width="5" height="1373" fill="#bdbdbd"/>
<rect x="123" y="921" width="3359" height="67" fill="#bfbfbf"/>
<rect x="123" y="986" width="3359" height="5" fill="#000"/>
<rect x="268.5" y="918" width="4" height="72" fill="#000"/>
<rect x="1708" y="918" width="4" height="72" fill="#000"/>
<rect x="1959" y="918" width="4" height="72" fill="#000"/>
<rect x="2339.5" y="918" width="4" height="72" fill="#000"/>
<rect x="2720" y="918" width="4" height="72" fill="#000"/>
<rect x="3100.5" y="918" width="4" height="72" fill="#000"/>
<rect x="3480.5" y="918" width="4" height="72" fill="#000"/>
<rect x="125" y="806" width="3355" height="107" fill="#fff"/>
<text x="981.0" y="897.0" font-size="100.29" textLength="1652.2" lengthAdjust="spacingAndGlyphs" fill="#000" font-weight="bold">Concrete and Formwork Requirement</text>
<rect x="121.5" y="802.5" width="3359" height="115" fill="none" stroke="#217346" stroke-width="7"/>
<rect x="3470" y="906" width="14" height="18" fill="#217346"/>
<text x="180.0" y="784.0" font-size="53.78" textLength="34.1" lengthAdjust="spacingAndGlyphs" fill="#217346" font-weight="bold">A</text>
<text x="979.0" y="784.0" font-size="53.78" textLength="28.1" lengthAdjust="spacingAndGlyphs" fill="#217346" font-weight="bold">B</text>
<text x="1823.0" y="784.0" font-size="53.78" textLength="30.1" lengthAdjust="spacingAndGlyphs" fill="#217346" font-weight="bold">C</text>
<text x="2136.0" y="784.0" font-size="53.78" textLength="32.1" lengthAdjust="spacingAndGlyphs" fill="#217346" font-weight="bold">D</text>
<text x="2521.0" y="784.0" font-size="53.78" textLength="25.1" lengthAdjust="spacingAndGlyphs" fill="#217346" font-weight="bold">E</text>
<text x="2902.0" y="784.0" font-size="53.78" textLength="23.0" lengthAdjust="spacingAndGlyphs" fill="#217346" font-weight="bold">F</text>
<text x="3278.0" y="784.0" font-size="53.78" textLength="31.9" lengthAdjust="spacingAndGlyphs" fill="#217346" font-weight="bold">G</text>
<rect x="121" y="800" width="3362" height="6" fill="#217346"/>
<text x="62.7" y="895.0" font-size="48.00" textLength="24.6" lengthAdjust="spacingAndGlyphs" fill="#217346">1</text>
<text x="64.0" y="973.0" font-size="48.00" textLength="24.0" lengthAdjust="spacingAndGlyphs" fill="#555">2</text>
<text x="64.0" y="1046.0" font-size="48.00" textLength="24.0" lengthAdjust="spacingAndGlyphs" fill="#555">3</text>
<text x="64.0" y="1119.9" font-size="48.00" textLength="24.0" lengthAdjust="spacingAndGlyphs" fill="#555">4</text>
<text x="64.0" y="1193.8" font-size="48.00" textLength="24.0" lengthAdjust="spacingAndGlyphs" fill="#555">5</text>
<text x="64.0" y="1267.7" font-size="48.00" textLength="24.0" lengthAdjust="spacingAndGlyphs" fill="#555">6</text>
<text x="64.0" y="1341.6" font-size="48.00" textLength="24.0" lengthAdjust="spacingAndGlyphs" fill="#555">7</text>
<text x="64.0" y="1415.5" font-size="48.00" textLength="24.0" lengthAdjust="spacingAndGlyphs" fill="#555">8</text>
<text x="64.0" y="1489.4" font-size="48.00" textLength="24.0" lengthAdjust="spacingAndGlyphs" fill="#555">9</text>
<text x="52.0" y="1563.3" font-size="48.00" textLength="48.1" lengthAdjust="spacingAndGlyphs" fill="#555">10</text>
<text x="53.5" y="1637.2" font-size="48.00" textLength="44.8" lengthAdjust="spacingAndGlyphs" fill="#555">11</text>
<text x="52.0" y="1711.1" font-size="48.00" textLength="48.1" lengthAdjust="spacingAndGlyphs" fill="#555">12</text>
<text x="52.0" y="1785.0" font-size="48.00" textLength="48.1" lengthAdjust="spacingAndGlyphs" fill="#555">13</text>
<text x="52.0" y="1858.9" font-size="48.00" textLength="48.1" lengthAdjust="spacingAndGlyphs" fill="#555">14</text>
<text x="52.0" y="1932.8" font-size="48.00" textLength="48.1" lengthAdjust="spacingAndGlyphs" fill="#555">15</text>
<text x="52.0" y="2006.7" font-size="48.00" textLength="48.1" lengthAdjust="spacingAndGlyphs" fill="#555">16</text>
<text x="52.0" y="2080.6" font-size="48.00" textLength="48.1" lengthAdjust="spacingAndGlyphs" fill="#555">17</text>
<text x="52.0" y="2154.5" font-size="48.00" textLength="48.1" lengthAdjust="spacingAndGlyphs" fill="#555">18</text>
<text x="175.0" y="973.0" font-size="50.87" textLength="45.0" lengthAdjust="spacingAndGlyphs" fill="#000" font-weight="bold">ID</text>
<text x="866.0" y="973.0" font-size="50.87" textLength="248.1" lengthAdjust="spacingAndGlyphs" fill="#000" font-weight="bold">Task Name</text>
<text x="1741.0" y="973.0" font-size="50.87" textLength="195.0" lengthAdjust="spacingAndGlyphs" fill="#000" font-weight="bold">Duration</text>
<text x="2041.0" y="973.0" font-size="50.87" textLength="220.0" lengthAdjust="spacingAndGlyphs" fill="#000" font-weight="bold">Star_Date</text>
<text x="2400.0" y="973.0" font-size="50.87" textLength="264.9" lengthAdjust="spacingAndGlyphs" fill="#000" font-weight="bold">Finish_Date</text>
<text x="2750.0" y="973.0" font-size="50.87" textLength="320.9" lengthAdjust="spacingAndGlyphs" fill="#000" font-weight="bold">Concrete (m3)</text>
<text x="3119.0" y="973.0" font-size="50.87" textLength="348.9" lengthAdjust="spacingAndGlyphs" fill="#000" font-weight="bold">Formwork (m2)</text>
<g stroke="#000" stroke-width="0.6">
<text x="235.0" y="1046.0" font-size="50.87" textLength="26.0" lengthAdjust="spacingAndGlyphs" fill="#000">1</text>
<text x="280.0" y="1046.0" font-size="50.87" textLength="367.0" lengthAdjust="spacingAndGlyphs" fill="#000">Supperstructure</text>
<text x="1721.0" y="1046.0" font-size="50.87" textLength="162.9" lengthAdjust="spacingAndGlyphs" fill="#000">66 days</text>
<text x="1972.0" y="1046.0" font-size="50.87" textLength="214.9" lengthAdjust="spacingAndGlyphs" fill="#000">Fri 3/1/19</text>
<text x="2351.0" y="1046.0" font-size="50.87" textLength="240.8" lengthAdjust="spacingAndGlyphs" fill="#000">Sun 5/5/19</text>
<text x="3065.0" y="1046.0" font-size="50.87" textLength="26.0" lengthAdjust="spacingAndGlyphs" fill="#000">0</text>
<text x="3446.0" y="1046.0" font-size="50.87" textLength="26.0" lengthAdjust="spacingAndGlyphs" fill="#000">0</text>
<text x="235.0" y="1119.9" font-size="50.87" textLength="26.0" lengthAdjust="spacingAndGlyphs" fill="#000">2</text>
<text x="314.0" y="1119.9" font-size="50.87" textLength="934.9" lengthAdjust="spacingAndGlyphs" fill="#000">Steel erection of column in zone 1 level 1</text>
<text x="1721.0" y="1119.9" font-size="50.87" textLength="117.1" lengthAdjust="spacingAndGlyphs" fill="#000">1 day</text>
<text x="1972.0" y="1119.9" font-size="50.87" textLength="214.9" lengthAdjust="spacingAndGlyphs" fill="#000">Fri 3/1/19</text>
<text x="2351.0" y="1119.9" font-size="50.87" textLength="214.9" lengthAdjust="spacingAndGlyphs" fill="#000">Fri 3/1/19</text>
<text x="3065.0" y="1119.9" font-size="50.87" textLength="26.0" lengthAdjust="spacingAndGlyphs" fill="#000">0</text>
<text x="3446.0" y="1119.9" font-size="50.87" textLength="26.0" lengthAdjust="spacingAndGlyphs" fill="#000">0</text>
<text x="235.0" y="1193.8" font-size="50.87" textLength="26.0" lengthAdjust="spacingAndGlyphs" fill="#000">3</text>
<text x="314.0" y="1193.8" font-size="50.87" textLength="1049.9" lengthAdjust="spacingAndGlyphs" fill="#000">Formwork erection of column in zone 1 level 1</text>
<text x="1721.0" y="1193.8" font-size="50.87" textLength="117.1" lengthAdjust="spacingAndGlyphs" fill="#000">1 day</text>
<text x="1972.0" y="1193.8" font-size="50.87" textLength="226.2" lengthAdjust="spacingAndGlyphs" fill="#000">Sat 3/2/19</text>
<text x="2351.0" y="1193.8" font-size="50.87" textLength="226.2" lengthAdjust="spacingAndGlyphs" fill="#000">Sat 3/2/19</text>
<text x="3065.0" y="1193.8" font-size="50.87" textLength="26.0" lengthAdjust="spacingAndGlyphs" fill="#000">0</text>
<text x="3328.8" y="1193.8" font-size="50.87" textLength="143.1" lengthAdjust="spacingAndGlyphs" fill="#000">138.73</text>
<text x="235.0" y="1267.7" font-size="50.87" textLength="26.0" lengthAdjust="spacingAndGlyphs" fill="#000">4</text>
<text x="314.0" y="1267.7" font-size="50.87" textLength="1002.9" lengthAdjust="spacingAndGlyphs" fill="#000">Pouring concrete of column in zone 1 level 1</text>
<text x="1721.0" y="1267.7" font-size="50.87" textLength="117.1" lengthAdjust="spacingAndGlyphs" fill="#000">1 day</text>
<text x="1972.0" y="1267.7" font-size="50.87" textLength="240.8" lengthAdjust="spacingAndGlyphs" fill="#000">Sun 3/3/19</text>
<text x="2351.0" y="1267.7" font-size="50.87" textLength="240.8" lengthAdjust="spacingAndGlyphs" fill="#000">Sun 3/3/19</text>
<text x="2973.8" y="1267.7" font-size="50.87" textLength="117.1" lengthAdjust="spacingAndGlyphs" fill="#000">10.75</text>
<text x="3446.0" y="1267.7" font-size="50.87" textLength="26.0" lengthAdjust="spacingAndGlyphs" fill="#000">0</text>
<text x="235.0" y="1341.6" font-size="50.87" textLength="26.0" lengthAdjust="spacingAndGlyphs" fill="#000">5</text>
<text x="314.0" y="1341.6" font-size="50.87" textLength="934.9" lengthAdjust="spacingAndGlyphs" fill="#000">Steel erection of column in zone 2 level 1</text>
<text x="1721.0" y="1341.6" font-size="50.87" textLength="117.1" lengthAdjust="spacingAndGlyphs" fill="#000">1 day</text>
<text x="1972.0" y="1341.6" font-size="50.87" textLength="226.2" lengthAdjust="spacingAndGlyphs" fill="#000">Sat 3/2/19</text>
<text x="2351.0" y="1341.6" font-size="50.87" textLength="226.2" lengthAdjust="spacingAndGlyphs" fill="#000">Sat 3/2/19</text>
<text x="3065.0" y="1341.6" font-size="50.87" textLength="26.0" lengthAdjust="spacingAndGlyphs" fill="#000">0</text>
<text x="3446.0" y="1341.6" font-size="50.87" textLength="26.0" lengthAdjust="spacingAndGlyphs" fill="#000">0</text>
<text x="235.0" y="1415.5" font-size="50.87" textLength="26.0" lengthAdjust="spacingAndGlyphs" fill="#000">6</text>
<text x="314.0" y="1415.5" font-size="50.87" textLength="1049.9" lengthAdjust="spacingAndGlyphs" fill="#000">Formwork erection of column in zone 2 level 1</text>
<text x="1721.0" y="1415.5" font-size="50.87" textLength="117.1" lengthAdjust="spacingAndGlyphs" fill="#000">1 day</text>
<text x="1972.0" y="1415.5" font-size="50.87" textLength="240.8" lengthAdjust="spacingAndGlyphs" fill="#000">Sun 3/3/19</text>
<text x="2351.0" y="1415.5" font-size="50.87" textLength="240.8" lengthAdjust="spacingAndGlyphs" fill="#000">Sun 3/3/19</text>
<text x="3065.0" y="1415.5" font-size="50.87" textLength="26.0" lengthAdjust="spacingAndGlyphs" fill="#000">0</text>
<text x="3328.8" y="1415.5" font-size="50.87" textLength="143.1" lengthAdjust="spacingAndGlyphs" fill="#000">121.84</text>
<text x="235.0" y="1489.4" font-size="50.87" textLength="26.0" lengthAdjust="spacingAndGlyphs" fill="#000">7</text>
<text x="314.0" y="1489.4" font-size="50.87" textLength="1002.9" lengthAdjust="spacingAndGlyphs" fill="#000">Pouring concrete of column in zone 2 level 1</text>
<text x="1721.0" y="1489.4" font-size="50.87" textLength="117.1" lengthAdjust="spacingAndGlyphs" fill="#000">1 day</text>
<text x="1972.0" y="1489.4" font-size="50.87" textLength="258.9" lengthAdjust="spacingAndGlyphs" fill="#000">Mon 3/4/19</text>
<text x="2351.0" y="1489.4" font-size="50.87" textLength="258.9" lengthAdjust="spacingAndGlyphs" fill="#000">Mon 3/4/19</text>
<text x="3000.0" y="1489.4" font-size="50.87" textLength="91.1" lengthAdjust="spacingAndGlyphs" fill="#000">9.58</text>
<text x="3446.0" y="1489.4" font-size="50.87" textLength="26.0" lengthAdjust="spacingAndGlyphs" fill="#000">0</text>
<text x="235.0" y="1563.3" font-size="50.87" textLength="26.0" lengthAdjust="spacingAndGlyphs" fill="#000">8</text>
<text x="314.0" y="1563.3" font-size="50.87" textLength="1253.0" lengthAdjust="spacingAndGlyphs" fill="#000">Formwork erection of beams and slabs in zone 1 level 2</text>
<text x="1721.0" y="1563.3" font-size="50.87" textLength="140.1" lengthAdjust="spacingAndGlyphs" fill="#000">3 days</text>
<text x="1972.0" y="1563.3" font-size="50.87" textLength="258.9" lengthAdjust="spacingAndGlyphs" fill="#000">Mon 3/4/19</text>
<text x="2351.0" y="1563.3" font-size="50.87" textLength="262.8" lengthAdjust="spacingAndGlyphs" fill="#000">Wed 3/6/19</text>
<text x="3065.0" y="1563.3" font-size="50.87" textLength="26.0" lengthAdjust="spacingAndGlyphs" fill="#000">0</text>
<text x="3328.8" y="1563.3" font-size="50.87" textLength="143.1" lengthAdjust="spacingAndGlyphs" fill="#000">270.68</text>
<text x="235.0" y="1637.2" font-size="50.87" textLength="26.0" lengthAdjust="spacingAndGlyphs" fill="#000">9</text>
<text x="314.0" y="1637.2" font-size="50.87" textLength="1140.0" lengthAdjust="spacingAndGlyphs" fill="#000">Steel erection of beams and slabs in zone 1 level 2</text>
<text x="1721.0" y="1637.2" font-size="50.87" textLength="140.1" lengthAdjust="spacingAndGlyphs" fill="#000">3 days</text>
<text x="1972.0" y="1637.2" font-size="50.87" textLength="243.5" lengthAdjust="spacingAndGlyphs" fill="#000">Thu 3/7/19</text>
<text x="2351.0" y="1637.2" font-size="50.87" textLength="226.2" lengthAdjust="spacingAndGlyphs" fill="#000">Sat 3/9/19</text>
<text x="3065.0" y="1637.2" font-size="50.87" textLength="26.0" lengthAdjust="spacingAndGlyphs" fill="#000">0</text>
<text x="3446.0" y="1637.2" font-size="50.87" textLength="26.0" lengthAdjust="spacingAndGlyphs" fill="#000">0</text>
<text x="209.1" y="1711.1" font-size="50.87" textLength="52.1" lengthAdjust="spacingAndGlyphs" fill="#000">10</text>
<text x="314.0" y="1711.1" font-size="50.87" textLength="1205.0" lengthAdjust="spacingAndGlyphs" fill="#000">Pouring concrete of beams and slabs in zone 1 level 2</text>
<text x="1721.0" y="1711.1" font-size="50.87" textLength="117.1" lengthAdjust="spacingAndGlyphs" fill="#000">1 day</text>
<text x="1972.0" y="1711.1" font-size="50.87" textLength="266.9" lengthAdjust="spacingAndGlyphs" fill="#000">Sun 3/10/19</text>
<text x="2351.0" y="1711.1" font-size="50.87" textLength="266.9" lengthAdjust="spacingAndGlyphs" fill="#000">Sun 3/10/19</text>
<text x="2973.8" y="1711.1" font-size="50.87" textLength="117.1" lengthAdjust="spacingAndGlyphs" fill="#000">32.63</text>
<text x="3446.0" y="1711.1" font-size="50.87" textLength="26.0" lengthAdjust="spacingAndGlyphs" fill="#000">0</text>
<text x="212.3" y="1785.0" font-size="50.87" textLength="48.6" lengthAdjust="spacingAndGlyphs" fill="#000">11</text>
<text x="314.0" y="1785.0" font-size="50.87" textLength="934.9" lengthAdjust="spacingAndGlyphs" fill="#000">Steel erection of column in zone 1 level 2</text>
<text x="1721.0" y="1785.0" font-size="50.87" textLength="117.1" lengthAdjust="spacingAndGlyphs" fill="#000">1 day</text>
<text x="1972.0" y="1785.0" font-size="50.87" textLength="243.5" lengthAdjust="spacingAndGlyphs" fill="#000">Thu 3/7/19</text>
<text x="2351.0" y="1785.0" font-size="50.87" textLength="243.5" lengthAdjust="spacingAndGlyphs" fill="#000">Thu 3/7/19</text>
<text x="3065.0" y="1785.0" font-size="50.87" textLength="26.0" lengthAdjust="spacingAndGlyphs" fill="#000">0</text>
<text x="3446.0" y="1785.0" font-size="50.87" textLength="26.0" lengthAdjust="spacingAndGlyphs" fill="#000">0</text>
<text x="209.1" y="1858.9" font-size="50.87" textLength="52.1" lengthAdjust="spacingAndGlyphs" fill="#000">12</text>
<text x="314.0" y="1858.9" font-size="50.87" textLength="1049.9" lengthAdjust="spacingAndGlyphs" fill="#000">Formwork erection of column in zone 1 level 2</text>
<text x="1721.0" y="1858.9" font-size="50.87" textLength="117.1" lengthAdjust="spacingAndGlyphs" fill="#000">1 day</text>
<text x="1972.0" y="1858.9" font-size="50.87" textLength="214.9" lengthAdjust="spacingAndGlyphs" fill="#000">Fri 3/8/19</text>
<text x="2351.0" y="1858.9" font-size="50.87" textLength="214.9" lengthAdjust="spacingAndGlyphs" fill="#000">Fri 3/8/19</text>
<text x="3065.0" y="1858.9" font-size="50.87" textLength="26.0" lengthAdjust="spacingAndGlyphs" fill="#000">0</text>
<text x="3328.8" y="1858.9" font-size="50.87" textLength="143.1" lengthAdjust="spacingAndGlyphs" fill="#000">127.01</text>
<text x="209.1" y="1932.8" font-size="50.87" textLength="52.1" lengthAdjust="spacingAndGlyphs" fill="#000">13</text>
<text x="314.0" y="1932.8" font-size="50.87" textLength="1002.9" lengthAdjust="spacingAndGlyphs" fill="#000">Pouring concrete of column in zone 1 level 2</text>
<text x="1721.0" y="1932.8" font-size="50.87" textLength="117.1" lengthAdjust="spacingAndGlyphs" fill="#000">1 day</text>
<text x="1972.0" y="1932.8" font-size="50.87" textLength="226.2" lengthAdjust="spacingAndGlyphs" fill="#000">Sat 3/9/19</text>
<text x="2351.0" y="1932.8" font-size="50.87" textLength="226.2" lengthAdjust="spacingAndGlyphs" fill="#000">Sat 3/9/19</text>
<text x="3000.0" y="1932.8" font-size="50.87" textLength="91.1" lengthAdjust="spacingAndGlyphs" fill="#000">9.85</text>
<text x="3446.0" y="1932.8" font-size="50.87" textLength="26.0" lengthAdjust="spacingAndGlyphs" fill="#000">0</text>
<text x="209.1" y="2006.7" font-size="50.87" textLength="52.1" lengthAdjust="spacingAndGlyphs" fill="#000">14</text>
<text x="314.0" y="2006.7" font-size="50.87" textLength="1253.0" lengthAdjust="spacingAndGlyphs" fill="#000">Formwork erection of beams and slabs in zone 2 level 2</text>
<text x="1721.0" y="2006.7" font-size="50.87" textLength="140.1" lengthAdjust="spacingAndGlyphs" fill="#000">3 days</text>
<text x="1972.0" y="2006.7" font-size="50.87" textLength="266.9" lengthAdjust="spacingAndGlyphs" fill="#000">Sun 3/10/19</text>
<text x="2351.0" y="2006.7" font-size="50.87" textLength="264.4" lengthAdjust="spacingAndGlyphs" fill="#000">Tue 3/12/19</text>
<text x="3065.0" y="2006.7" font-size="50.87" textLength="26.0" lengthAdjust="spacingAndGlyphs" fill="#000">0</text>
<text x="3328.8" y="2006.7" font-size="50.87" textLength="143.1" lengthAdjust="spacingAndGlyphs" fill="#000">259.12</text>
<text x="209.1" y="2080.6" font-size="50.87" textLength="52.1" lengthAdjust="spacingAndGlyphs" fill="#000">15</text>
<text x="314.0" y="2080.6" font-size="50.87" textLength="1140.0" lengthAdjust="spacingAndGlyphs" fill="#000">Steel erection of beams and slabs in zone 2 level 2</text>
<text x="1721.0" y="2080.6" font-size="50.87" textLength="140.1" lengthAdjust="spacingAndGlyphs" fill="#000">3 days</text>
<text x="1972.0" y="2080.6" font-size="50.87" textLength="289.0" lengthAdjust="spacingAndGlyphs" fill="#000">Wed 3/13/19</text>
<text x="2351.0" y="2080.6" font-size="50.87" textLength="241.1" lengthAdjust="spacingAndGlyphs" fill="#000">Fri 3/15/19</text>
<text x="3065.0" y="2080.6" font-size="50.87" textLength="26.0" lengthAdjust="spacingAndGlyphs" fill="#000">0</text>
<text x="3446.0" y="2080.6" font-size="50.87" textLength="26.0" lengthAdjust="spacingAndGlyphs" fill="#000">0</text>
<text x="209.1" y="2154.5" font-size="50.87" textLength="52.1" lengthAdjust="spacingAndGlyphs" fill="#000">16</text>
<text x="314.0" y="2154.5" font-size="50.87" textLength="1205.0" lengthAdjust="spacingAndGlyphs" fill="#000">Pouring concrete of beams and slabs in zone 2 level 2</text>
<text x="1721.0" y="2154.5" font-size="50.87" textLength="117.1" lengthAdjust="spacingAndGlyphs" fill="#000">1 day</text>
<text x="1972.0" y="2154.5" font-size="50.87" textLength="252.4" lengthAdjust="spacingAndGlyphs" fill="#000">Sat 3/16/19</text>
<text x="2351.0" y="2154.5" font-size="50.87" textLength="252.4" lengthAdjust="spacingAndGlyphs" fill="#000">Sat 3/16/19</text>
<text x="2973.8" y="2154.5" font-size="50.87" textLength="117.1" lengthAdjust="spacingAndGlyphs" fill="#000">31.48</text>
<text x="3446.0" y="2154.5" font-size="50.87" textLength="26.0" lengthAdjust="spacingAndGlyphs" fill="#000">0</text>
</g>
<rect x="3501.0" y="742.0" width="51" height="49" fill="none" stroke="#ababab" stroke-width="4"/>
<path d="M3513 773 L3526 758 L3539 773 Z" fill="#777"/>
<rect x="3501.0" y="794.0" width="51" height="205" fill="none" stroke="#ababab" stroke-width="4"/>
<rect x="3499" y="1001" width="55" height="1121" fill="#f2f2f2"/>
<rect x="3501.0" y="2125.0" width="51" height="48" fill="none" stroke="#ababab" stroke-width="4"/>
<path d="M3513 2142 L3526 2157 L3539 2142 Z" fill="#777"/>
<rect x="30" y="2173" width="3535" height="102" fill="#f6f6f6"/>
<rect x="30" y="2172" width="3455" height="4" fill="#ababab"/>
<rect x="398" y="2172" width="277" height="91" fill="#fff"/>
<rect x="398" y="2172" width="4" height="88" fill="#ababab"/>
<rect x="671" y="2172" width="4" height="88" fill="#ababab"/>
<rect x="398" y="2257" width="277" height="7" fill="#217346"/>
<text x="443.0" y="2239.0" font-size="55.23" textLength="187.0" lengthAdjust="spacingAndGlyphs" fill="#217346" font-weight="bold">Material</text>
<path d="M145 2209 L127 2221 L145 2233 Z" fill="#c0c0c0"/>
<path d="M235 2209 L252 2221 L235 2233 Z" fill="#c0c0c0"/>
<circle cx="826" cy="2224" r="27" fill="none" stroke="#a5a5a5" stroke-width="4"/>
<rect x="811" y="2220" width="30" height="7" fill="#777"/>
<rect x="822.5" y="2209" width="7" height="29" fill="#777"/>
<rect x="2149" y="2205" width="9" height="8" fill="#b0b0b0"/>
<rect x="2149" y="2220" width="9" height="8" fill="#b0b0b0"/>
<rect x="2149" y="2235" width="9" height="8" fill="#b0b0b0"/>
<rect x="2214" y="2198" width="1273" height="55" fill="#ebebeb"/>
<rect x="2216.0" y="2200.0" width="50" height="50" fill="#fff" stroke="#ababab" stroke-width="4"/>
<path d="M2248 2211 L2232 2225 L2248 2239 Z" fill="#666"/>
<rect x="2267.0" y="2200.0" width="872" height="50" fill="#fff" stroke="#ababab" stroke-width="4"/>
<rect x="3434.0" y="2200.0" width="51" height="50" fill="#fff" stroke="#ababab" stroke-width="4"/>
<path d="M3453 2211 L3469 2225 L3453 2239 Z" fill="#666"/>
<rect x="25" y="2275" width="3545" height="87" fill="#217346"/>
<text x="57.0" y="2330.0" font-size="43.60" textLength="120.0" lengthAdjust="spacingAndGlyphs" fill="#fff">READY</text>
<rect x="2447" y="2279" width="140" height="78" fill="#0b6232"/>
<rect x="2492.8" y="2291.8" width="44.4" height="45.4" fill="none" stroke="#e8efe9" stroke-width="3.7"/>
<rect x="2506" y="2290" width="3.7" height="49" fill="#e8efe9"/>
<rect x="2521" y="2290" width="3.7" height="49" fill="#e8efe9"/>
<rect x="2491" y="2304" width="48" height="3.7" fill="#e8efe9"/>
<rect x="2491" y="2319" width="48" height="3.7" fill="#e8efe9"/>
<rect x="2632.8" y="2291.8" width="48.4" height="45.4" fill="none" stroke="#e8efe9" stroke-width="3.7"/>
<rect x="2643.8" y="2298.8" width="26.4" height="30.4" fill="none" stroke="#e8efe9" stroke-width="3.7"/>
<rect x="2650" y="2305" width="14" height="3.3" fill="#e8efe9"/>
<rect x="2650" y="2312" width="14" height="3.3" fill="#e8efe9"/>
<rect x="2650" y="2320" width="14" height="3.3" fill="#e8efe9"/>
<rect x="2772.8" y="2291.8" width="48.4" height="45.4" fill="none" stroke="#e8efe9" stroke-width="3.7"/>
<rect x="2774" y="2293" width="12" height="26" fill="#e8efe9"/>
<rect x="2790" y="2293" width="15" height="26" fill="#e8efe9"/>
<text x="3397.0" y="2329.0" font-size="47.97" textLength="97.9" lengthAdjust="spacingAndGlyphs" fill="#fff">100%</text>
<rect x="2886" y="2309" width="22" height="9" fill="#fff"/>
<rect x="2923" y="2312" width="369" height="3" fill="#fff"/>
<rect x="3099" y="2294" width="16" height="41" fill="#fff"/>
<rect x="3306" y="2312" width="30" height="7" fill="#fff"/>
<rect x="3317" y="2300" width="8" height="31" fill="#fff"/>
</svg></body></html>
